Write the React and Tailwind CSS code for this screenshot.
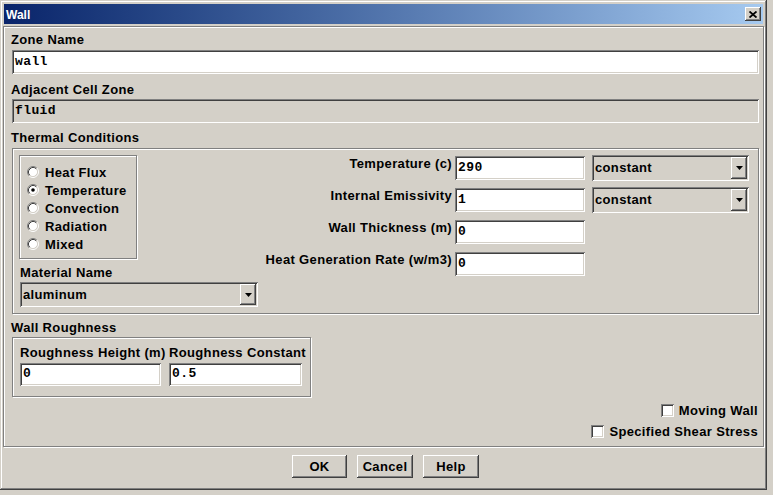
import React from 'react';

// Win2000 style bevels
const raised = "shadow-[inset_-1px_-1px_#404040,inset_1px_1px_#ffffff,inset_-2px_-2px_#808080,inset_2px_2px_#d4d0c8]";
const sunken = "shadow-[inset_1px_1px_#808080,inset_-1px_-1px_#ffffff,inset_2px_2px_#404040,inset_-2px_-2px_#d4d0c8]";
const etched = "border border-[#808080] shadow-[1px_1px_#ffffff,inset_1px_1px_#ffffff]";
const label = "text-[13px] leading-[15px] font-bold tracking-[0.35px] whitespace-nowrap";

const Field = ({ value, className = '', disabled }) => (
  <div className={`flex items-center pl-[3px] pb-[1px] font-['Liberation_Mono',monospace] font-bold text-[13px] tracking-[0.4px] ${disabled ? 'bg-[#d4d0c8]' : 'bg-white'} ${sunken} ${className}`}>
    {value}
  </div>
);

const Select = ({ value, className = '' }) => (
  <div className={`flex p-[2px] bg-[#d4d0c8] ${sunken} ${className}`}>
    <div className={`flex-1 flex items-center pl-[1px] pb-[1px] ${label}`}>{value}</div>
    <div className={`w-[16px] flex items-center justify-center bg-[#d4d0c8] ${raised}`}>
      <svg width="7" height="4" viewBox="0 0 7 4">
        <path d="M0 0h7L3.5 4z" fill="#000" />
      </svg>
    </div>
  </div>
);

const Radio = ({ checked, text }) => (
  <div className="h-[18px] flex items-center gap-[6px]">
    <svg width="12" height="12" viewBox="0 0 12 12" className="shrink-0">
      <circle cx="6" cy="6" r="4.5" fill="#fff" />
      <path d="M2.11 9.89A5.5 5.5 0 0 1 9.89 2.11" fill="none" stroke="#808080" />
      <path d="M9.89 2.11A5.5 5.5 0 0 1 2.11 9.89" fill="none" stroke="#ffffff" />
      <path d="M2.82 9.18A4.5 4.5 0 0 1 9.18 2.82" fill="none" stroke="#404040" />
      <path d="M9.18 2.82A4.5 4.5 0 0 1 2.82 9.18" fill="none" stroke="#d4d0c8" />
      {checked && <circle cx="6" cy="6" r="1.8" fill="#000" />}
    </svg>
    <span className={label}>{text}</span>
  </div>
);

const Check = ({ text }) => (
  <div className="h-[21px] flex items-center justify-end gap-[5px] mr-[1px]">
    <div className={`w-[13px] h-[13px] bg-white ${sunken}`} />
    <span className={label}>{text}</span>
  </div>
);

const Button = ({ children, className = '' }) => (
  <div className={`h-[23px] flex items-center justify-center bg-[#d4d0c8] ${raised} ${label} ${className}`}>
    {children}
  </div>
);

const rows = [
  { name: 'Temperature (c)', value: '290', method: 'constant' },
  { name: 'Internal Emissivity', value: '1', method: 'constant' },
  { name: 'Wall Thickness (m)', value: '0' },
  { name: 'Heat Generation Rate (w/m3)', value: '0' },
];

export default function App() {
  return (
    <div className="w-[773px] h-[495px] bg-[#d4d0c8] text-black font-['Liberation_Sans',Arial,sans-serif]">
      <div className="w-[767px] h-[490px] p-[2px] flex flex-col shadow-[inset_-1px_-1px_#404040,inset_1px_1px_#d4d0c8,inset_-2px_-2px_#808080,inset_2px_2px_#ffffff]">
        {/* title bar */}
        <div className="mx-[2px] mt-[2px] h-[20px] flex items-center justify-between pl-[2px] pr-[2px] bg-gradient-to-r from-[#0a246a] to-[#a6caf0]">
          <span className="text-white font-bold text-[12px] leading-[14px] pt-[1px]">Wall</span>
          <div className={`w-[16px] h-[14px] flex items-center justify-center bg-[#d4d0c8] ${raised}`}>
            <svg width="8" height="7" viewBox="0 0 8 7">
              <path d="M0.5 0.5l7 6M7.5 0.5l-7 6" stroke="#000" strokeWidth="1.8" />
            </svg>
          </div>
        </div>

        {/* main panel */}
        <div className={`mx-[1px] mt-[2px] h-[421px] pl-[8px] pr-[4px] pt-[5px] flex flex-col ${etched}`}>
          <div className={`${label} -ml-px`}>Zone Name</div>
          <Field value="wall" className="mt-[3px] h-[24px]" />
          <div className={`${label} -ml-px mt-[8px]`}>Adjacent Cell Zone</div>
          <Field value="fluid" disabled className="mt-[2px] h-[24px]" />

          <div className={`${label} -ml-px mt-[7px]`}>Thermal Conditions</div>
          <div className={`mt-[3px] h-[166px] shrink-0 flex pl-[6px] pt-[6px] pr-[9px] ${etched}`}>
            <div className="w-[240px] flex flex-col">
              <div className={`w-[118px] h-[104px] pl-[7px] pt-[7px] ${etched}`}>
                <Radio text="Heat Flux" />
                <Radio text="Temperature" checked />
                <Radio text="Convection" />
                <Radio text="Radiation" />
                <Radio text="Mixed" />
              </div>
              <div className={`${label} mt-[6px] ml-[1px]`}>Material Name</div>
              <Select value="aluminum" className="mt-[2px] ml-[1px] w-[238px] h-[25px]" />
            </div>
            <div className="flex-1 grid grid-cols-[1fr_130px_164px] auto-rows-[32px]">
              {rows.map((r) => (
                <React.Fragment key={r.name}>
                  <div className={`${label} text-right pr-[3px] pt-px`}>{r.name}</div>
                  <Field value={r.value} className="mt-px h-[24px]" />
                  <div className="pl-[7px]">
                    {r.method && <Select value={r.method} className="h-[26px]" />}
                  </div>
                </React.Fragment>
              ))}
            </div>
          </div>

          <div className={`${label} -ml-px mt-[6px]`}>Wall Roughness</div>
          <div className={`mt-[2px] w-[299px] h-[60px] shrink-0 flex gap-[8px] pl-[7px] pt-[7px] ${etched}`}>
            <div className="w-[141px] flex flex-col">
              <div className={label}>Roughness Height (m)</div>
              <Field value="0" className="mt-[3px] h-[23px]" />
            </div>
            <div className="w-[133px] flex flex-col">
              <div className={label}>Roughness Constant</div>
              <Field value="0.5" className="mt-[3px] h-[23px]" />
            </div>
          </div>

          <div className="mt-[3px]">
            <Check text="Moving Wall" />
            <Check text="Specified Shear Stress" />
          </div>
        </div>

        {/* buttons */}
        <div className="mt-[8px] flex justify-center gap-[10px] pl-[4px]">
          <Button className="w-[55px]">OK</Button>
          <Button className="w-[56px]">Cancel</Button>
          <Button className="w-[56px]">Help</Button>
        </div>
      </div>
    </div>
  );
}
